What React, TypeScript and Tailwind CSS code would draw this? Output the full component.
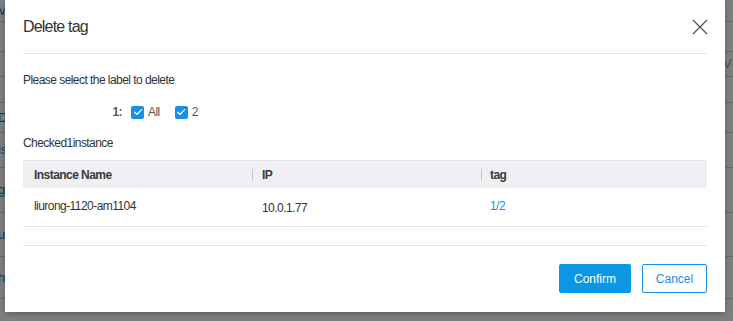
import React from 'react';

const rows = [
  { h: 'h-[22px]', t: 'V' },
  { h: 'h-[30px]', t: '' },
  { h: 'h-[25px]', t: '' },
  { h: 'h-[26px]', t: '' },
  { h: 'h-[30px]', t: 'D' },
  { h: 'h-[35px]', t: 'ls' },
  { h: 'h-[45px]', t: 'g' },
  { h: 'h-[44px]', t: 'u' },
  { h: 'h-[42px]', t: 'h' },
];

const Check: React.FC = () => (
  <span className="w-[13px] h-[13px] rounded-[2px] bg-[#1a8fe6] flex items-center justify-center">
    <svg width="10" height="10" viewBox="0 0 10 10" fill="none">
      <path d="M1.6 5.2 L4 7.4 L8.6 2.6" stroke="#fff" strokeWidth="1.3" strokeLinecap="round" strokeLinejoin="round" />
    </svg>
  </span>
);

export default function App() {
  const font = { fontFamily: '"Liberation Sans", Arial, sans-serif' };

  return (
    <div className="relative w-[733px] h-[321px] overflow-hidden bg-white" style={font}>
      {/* page behind the dialog */}
      <div className="flex flex-col w-full">
        {rows.map((r, i) => (
          <div key={i} className={`${r.h} border-b border-[#d6d6d6] flex items-center justify-between text-[13px] text-[#1f6fb5]`}>
            <span className="-ml-[2px]">{r.t}</span>
            <span className="text-[#999] mr-[-6px]">{i === 2 ? 'VII' : ''}</span>
          </div>
        ))}
      </div>
      <div className="absolute inset-0 bg-black/50" />

      {/* dialog */}
      <div className="absolute left-[5px] top-0 w-[720px] h-[312px] bg-white shadow-[0_2px_6px_rgba(0,0,0,0.25)] flex flex-col px-[18px] text-[#333] tracking-[-0.55px]">
        <div className="h-[54px] flex items-center justify-between border-b border-[#e6e6e6] shrink-0">
          <span className="text-[16px] text-[#333] pt-[1px] tracking-[-0.8px]">Delete tag</span>
          <svg width="16" height="16" viewBox="0 0 16 16" className="mr-[-1px]">
            <path d="M1 1 L15 15 M15 1 L1 15" stroke="#555" strokeWidth="1.3" />
          </svg>
        </div>

        <div className="pt-[18px] text-[12px] leading-[16px]">Please select the label to delete</div>

        <div className="flex items-center mt-[16px] text-[12px] h-[16px]">
          <span className="w-[99px] text-right font-bold text-[#555]">1:</span>
          <span className="ml-[9px]"><Check /></span>
          <span className="ml-[4px] text-[#555]">All</span>
          <span className="ml-[15px]"><Check /></span>
          <span className="ml-[4px] text-[#555]">2</span>
        </div>

        <div className="mt-[15px] text-[12px] leading-[16px]">Checked1instance</div>

        <div className="mt-[9px] flex flex-col text-[12px]">
          <div className="h-[28px] bg-[#efeff4] grid grid-cols-[229px_229px_1fr] items-center border-t border-[#e3e3ea] font-bold text-[#3a3a3a]">
            <span className="pl-[11px]">Instance Name</span>
            <span className="flex items-center">
              <span className="w-px h-[12px] bg-[#c8c8c8]" />
              <span className="pl-[9px]">IP</span>
            </span>
            <span className="flex items-center">
              <span className="w-px h-[12px] bg-[#c8c8c8]" />
              <span className="pl-[8px]">tag</span>
            </span>
          </div>
          <div className="h-[39px] grid grid-cols-[229px_229px_1fr] items-center border-b border-[#e3e3e3]">
            <span className="pl-[11px] pb-[2px]">liurong-1120-am1104</span>
            <span className="pl-[10px] pt-[2px]">10.0.1.77</span>
            <span className="pl-[9px] pb-[2px] text-[#1a8fe0]">1/2</span>
          </div>
        </div>

        <div className="mt-[18px] border-t border-[#e6e6e6] flex justify-end items-start pt-[18px] gap-[11px]">
          <button className="w-[72px] h-[29px] rounded-[2px] bg-[#0b96e6] text-white text-[12px] tracking-normal">Confirm</button>
          <button className="w-[65px] h-[29px] rounded-[2px] border border-[#1a8fe6] text-[#1a8fe0] bg-white text-[12px] tracking-normal">Cancel</button>
        </div>
      </div>
    </div>
  );
}
